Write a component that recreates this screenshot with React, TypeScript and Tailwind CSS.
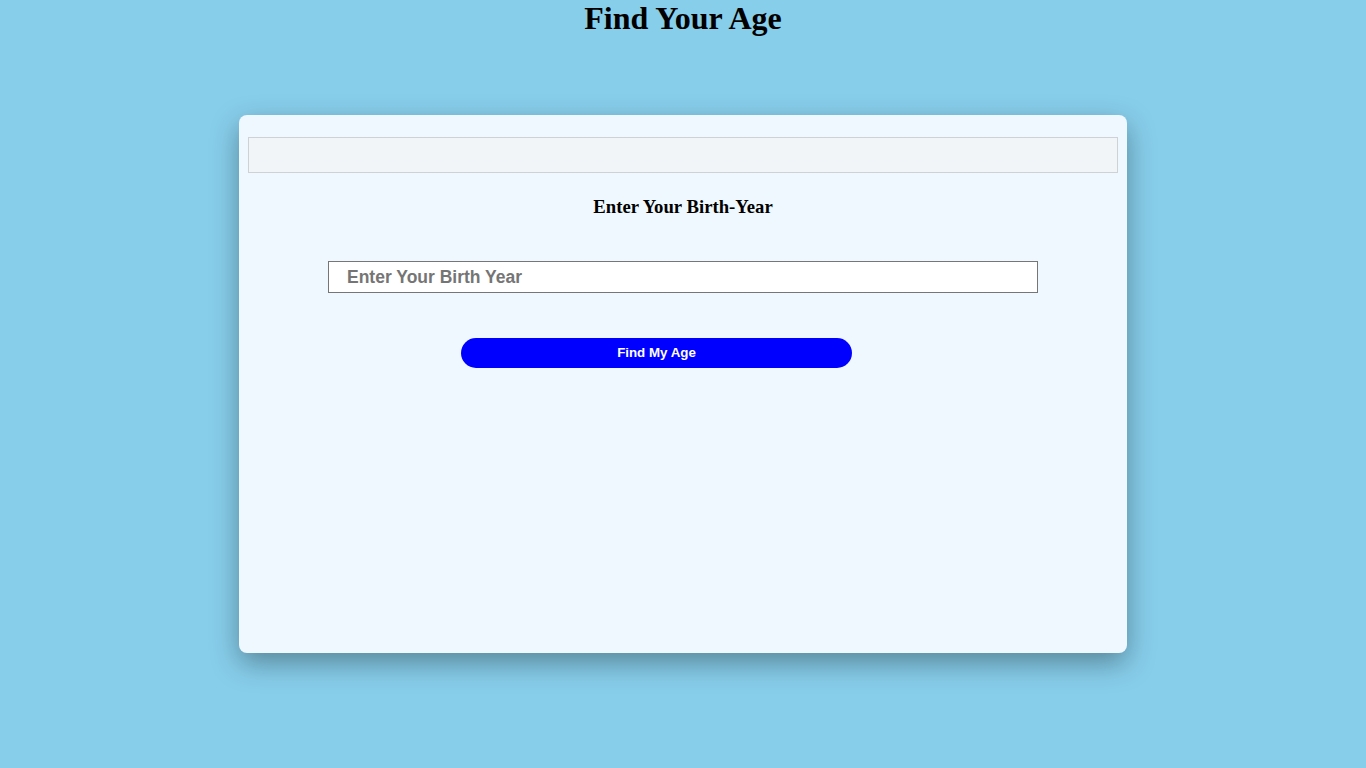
export default function App() {
  return (
    <div className="min-h-[768px] w-full bg-[#87CEEB] pt-px">
      <h1
        className="-mt-px text-center text-[32px] font-bold leading-[37px] text-black"
        style={{ fontFamily: '"Liberation Serif", "Times New Roman", serif' }}
      >
        Find Your Age
      </h1>

      <div className="mx-auto mt-[78px] h-[538px] w-[888px] rounded-lg bg-[#F0F8FF] px-[9px] pt-[22px] shadow-[0_10px_28px_rgba(0,0,0,0.35)]">
        {/* result box */}
        <div className="h-[36px] w-full border border-[#cfd2d4] bg-[#f2f5f8]" />

        <h3
          className="mt-[23px] text-center text-[18.72px] font-bold leading-[22px] text-black"
          style={{ fontFamily: '"Liberation Serif", "Times New Roman", serif' }}
        >
          Enter Your Birth-Year
        </h3>

        <div className="mt-[43px] flex justify-center">
          <input
            type="text"
            placeholder="Enter Your Birth Year"
            className="h-[32px] w-[710px] border border-[#767676] bg-white pl-[18px] text-[17.5px] font-bold text-black outline-none placeholder:text-[#757575]"
            style={{ fontFamily: '"Liberation Sans", Arial, sans-serif' }}
          />
        </div>

        <button
          className="mt-[45px] ml-[213px] block h-[30px] w-[391px] rounded-full bg-[#0000ff] text-[13.33px] font-bold text-white"
          style={{ fontFamily: '"Liberation Sans", Arial, sans-serif' }}
        >
          Find My Age
        </button>
      </div>
    </div>
  );
}
